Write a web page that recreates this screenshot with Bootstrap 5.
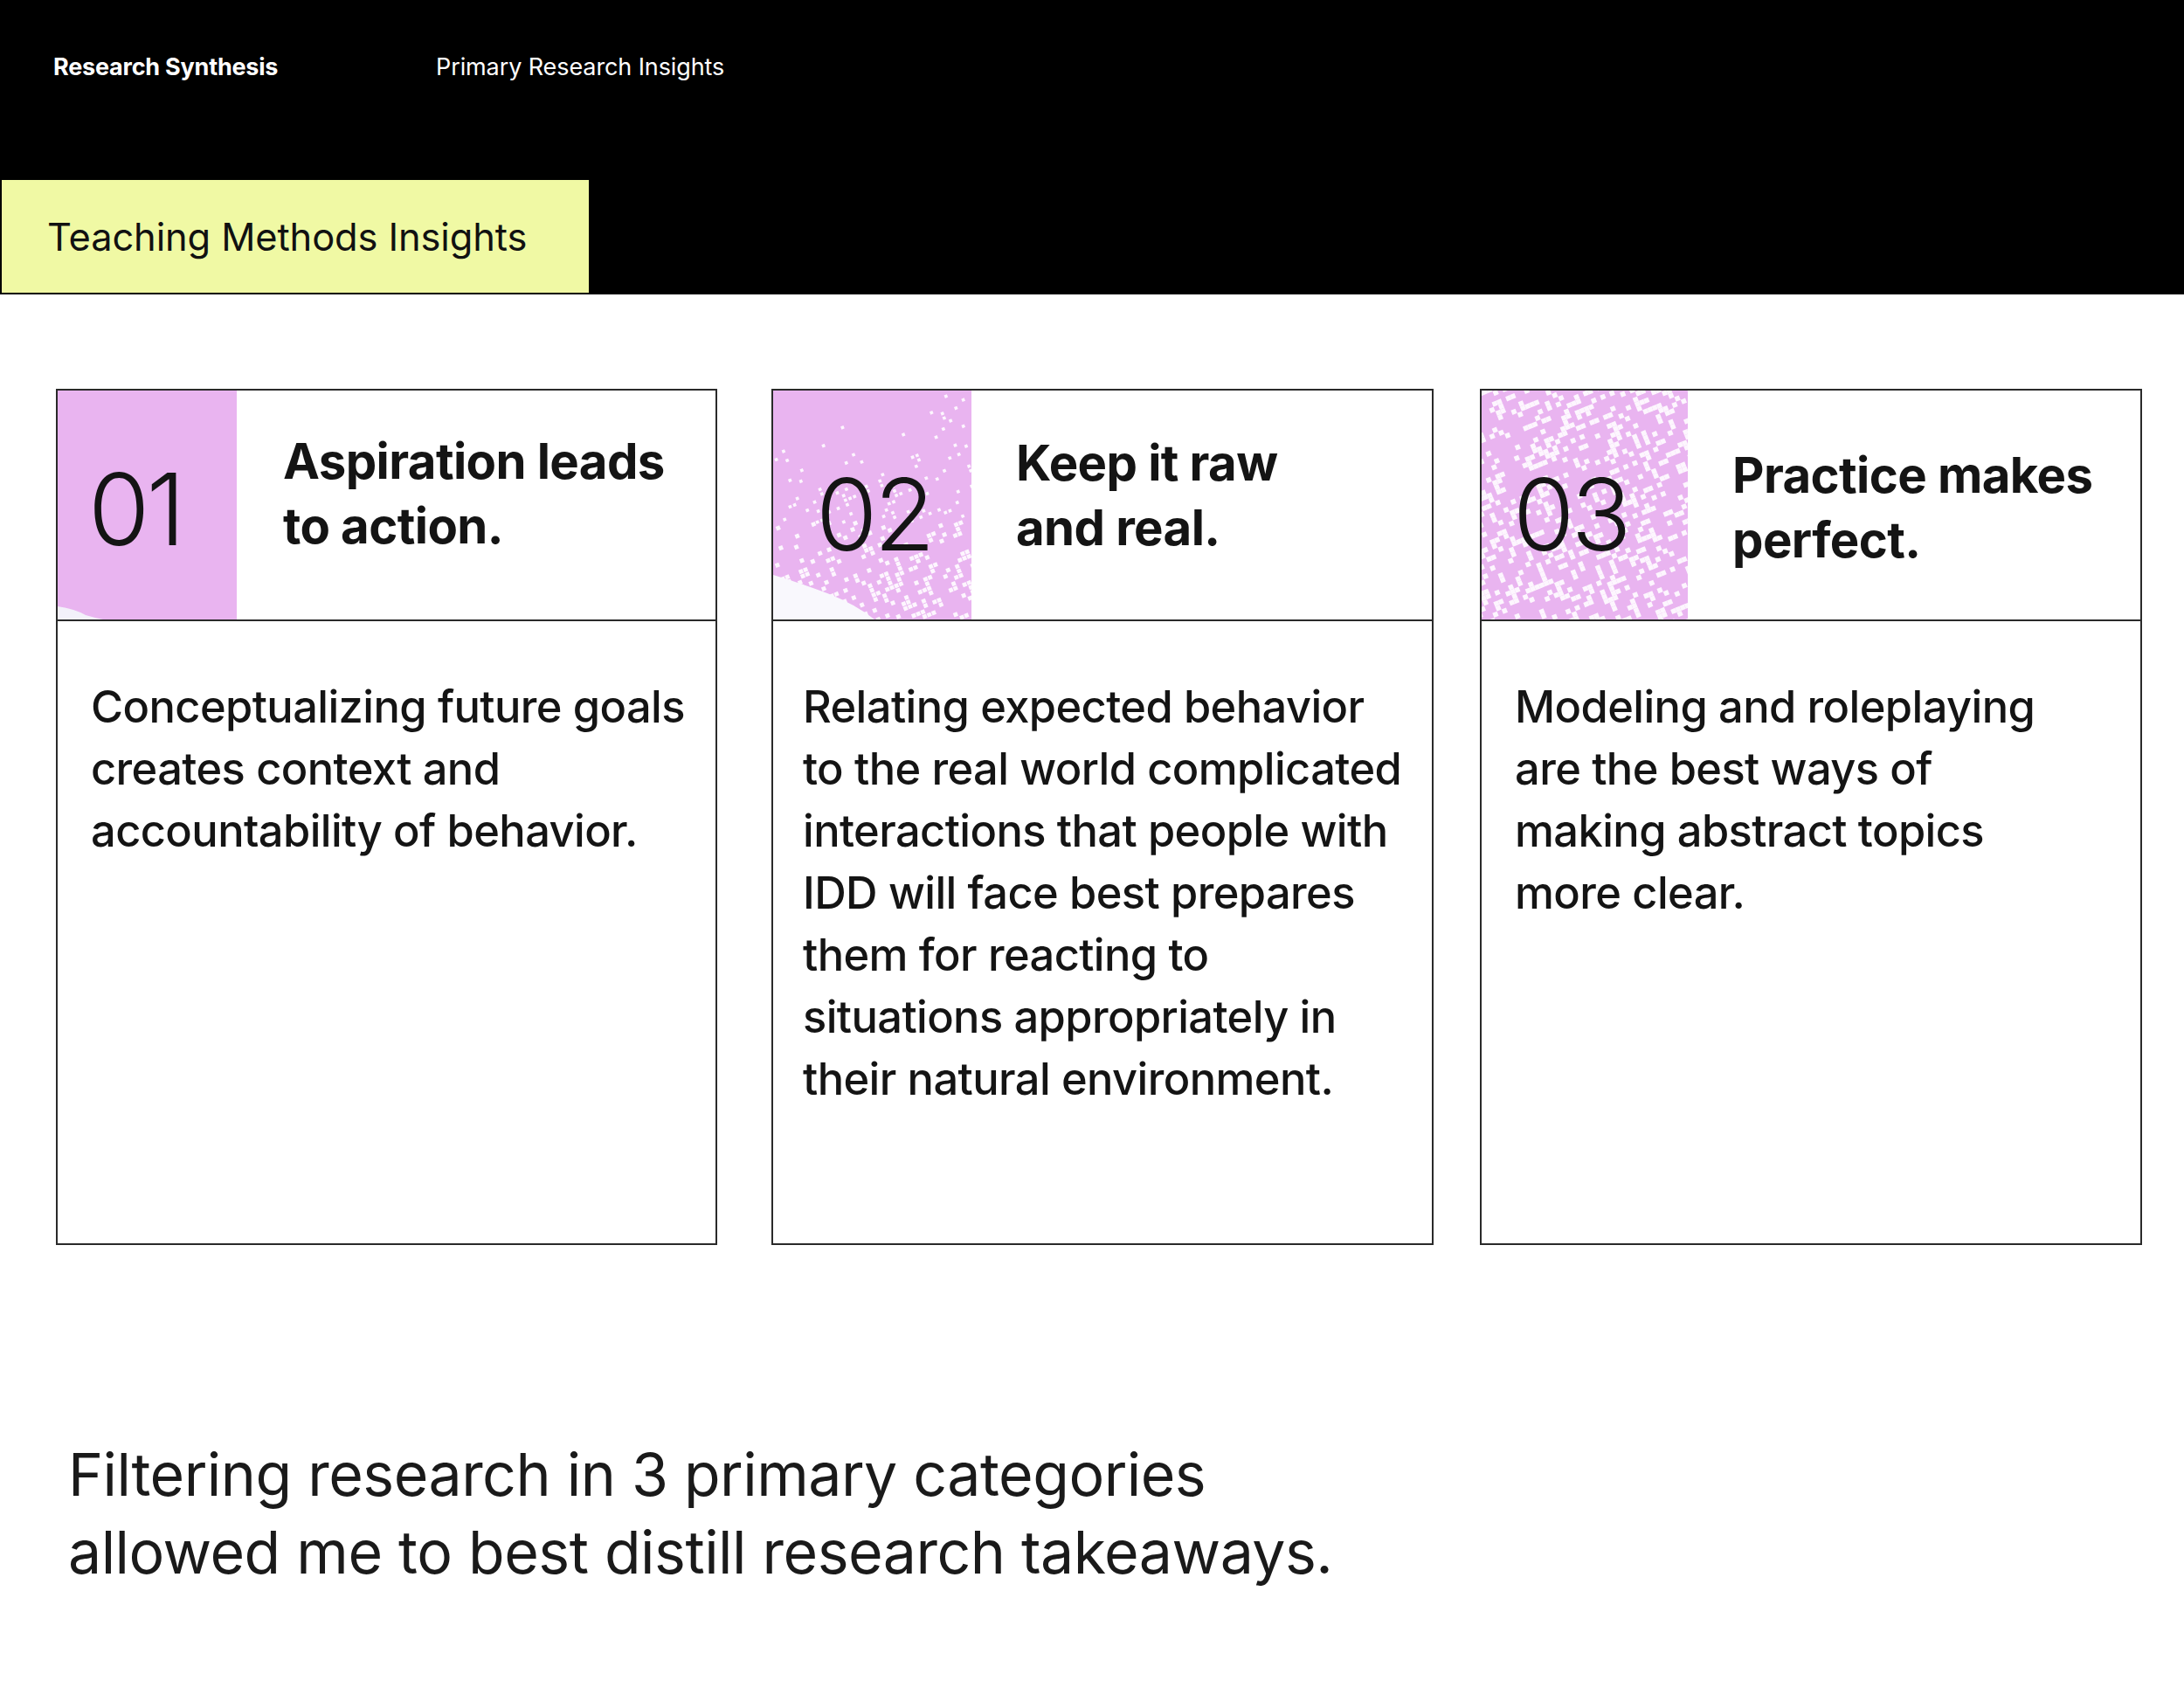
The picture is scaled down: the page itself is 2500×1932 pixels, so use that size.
<!DOCTYPE html>
<html lang="en">
<head>
<meta charset="utf-8">
<title>Research Synthesis</title>
<link href="https://cdn.jsdelivr.net/npm/bootstrap@5.3.0/dist/css/bootstrap.min.css" rel="stylesheet">
<style>
body{font-family:Inter,"Liberation Sans",sans-serif;color:#141414;background:#fff;width:2500px;height:1932px;overflow:hidden}
.top-band{background:#000;height:337px;color:#fff;padding-top:60px}
.top-nav{font-size:27px;line-height:34px;padding-left:61px;height:146px;letter-spacing:-.1px}
.top-nav b{width:438px;font-weight:700;letter-spacing:-.22px}
.tab-label{margin-left:2px;width:672px;height:129px;background:#f0f9a4;color:#111;font-size:43.4px;padding:2px 0 0 52px;letter-spacing:-.1px}
.cards-row{padding:108px 0 0 64px}
.sheet{width:758px;height:980px;border:2px solid #2a2a2a;border-radius:0;background:#fff;flex:none;color:#141414}
.sheet-a{width:757px;margin-right:62px}.sheet-b{margin-right:53px}
.sheet-head{height:264px;border-bottom:2px solid #2a2a2a;background:transparent;padding:0;border-radius:0!important}
.art{flex:none;height:262px;position:relative;background:#e9b4f0;overflow:hidden}
.art svg{position:absolute;inset:0;width:100%;height:100%}
.art span{position:absolute;font-size:114px;font-weight:340;line-height:1;letter-spacing:-4px;color:#141414}
.art-a{width:205px}.art-b{width:227px}.art-c{width:236px}
.art-a span{left:35px;top:79px}.art-b span{left:49px;top:85px}.art-c span{left:36px;top:85px}
.head-text{font-size:56.3px;line-height:74px;font-weight:700;letter-spacing:-.6px;margin:0}
.ht-a{padding:44px 0 0 53px}.ht-b{padding:46px 0 0 51px}.ht-c{padding:60px 0 0 51px}
.sheet-copy{font-size:50.6px;line-height:71px;padding:0;letter-spacing:-.6px;font-weight:450}
.sc-a{padding:62px 0 0 38px}.sc-b{padding:62px 0 0 34px}.sc-c{padding:62px 0 0 38px}
.closing{font-size:68px;line-height:89px;padding:0 0 0 78px;margin:218px 0 0;color:#1a1a1a;font-weight:400;letter-spacing:-.52px}
</style>
</head>
<body>
<header class="top-band">
  <nav class="top-nav d-flex"><b class="d-block">Research Synthesis</b><span>Primary Research Insights</span></nav>
  <div class="tab-label d-flex align-items-center">Teaching Methods Insights</div>
</header>
<main>
<section class="cards-row d-flex">
  <article class="card sheet sheet-a">
    <div class="card-header sheet-head d-flex">
      <div class="art art-a"><svg viewBox="0 0 205 262" preserveAspectRatio="none"><path d="M0 247 Q20 250 32 257 Q42 260 52 262 H0Z" fill="#f3f1fa"/></svg><span>01</span></div>
      <h2 class="head-text ht-a">Aspiration leads<br>to action.</h2>
    </div>
    <div class="card-body sheet-copy sc-a">Conceptualizing future goals<br>creates context and<br>accountability of behavior.</div>
  </article>
  <article class="card sheet sheet-b">
    <div class="card-header sheet-head d-flex">
      <div class="art art-b"><svg id="n2" viewBox="0 0 227 262" preserveAspectRatio="none"></svg><span>02</span></div>
      <h2 class="head-text ht-b">Keep it raw<br>and real.</h2>
    </div>
    <div class="card-body sheet-copy sc-b">Relating expected behavior<br>to the real world complicated<br>interactions that people with<br>IDD will face best prepares<br>them for reacting to<br>situations appropriately in<br>their natural environment.</div>
  </article>
  <article class="card sheet">
    <div class="card-header sheet-head d-flex">
      <div class="art art-c"><svg id="n3" viewBox="0 0 236 262" preserveAspectRatio="none"></svg><span>03</span></div>
      <h2 class="head-text ht-c">Practice makes<br>perfect.</h2>
    </div>
    <div class="card-body sheet-copy sc-c">Modeling and roleplaying<br>are the best ways of<br>making abstract topics<br>more clear.</div>
  </article>
</section>
<p class="closing">Filtering research in 3 primary categories<br>allowed me to best distill research takeaways.</p>
</main>
<script>
function rng(s){return function(){s=(s*1664525+1013904223)>>>0;return s/4294967296}}
function grid(id,w,h,seed,dens,size,extra){
  var r=rng(seed),c=5.6,a=-22*Math.PI/180,ca=Math.cos(a),sa=Math.sin(a),out='';
  for(var i=-70;i<90;i++)for(var j=-70;j<90;j++){
    var v=r(),x=i*c*ca-j*c*sa,y=i*c*sa+j*c*ca;
    if(x<-6||y<-6||x>w+6||y>h+6)continue;
    if(v<dens(x,y)){var s=size(x,y);out+='<rect x="'+(i*c).toFixed(1)+'" y="'+(j*c).toFixed(1)+'" width="'+s+'" height="'+s+'"/>';}
  }
  document.getElementById(id).innerHTML='<g fill="#fdf6fe" transform="rotate(-22)">'+out+'</g>'+(extra||'');
}
grid('n2',227,262,11,function(x,y){var d=Math.pow(y/262,1.6)*.3+(x/227)*.1-.02;if(y<40&&x<170)return 0;return d<.01?0:Math.min(.28,d)},
 function(x,y){return y<150?3.6:4.8},
 '<path d="M0 211 Q30 220 62 232 Q95 245 116 262 H0Z" fill="#f9f8fd"/>');
grid('n3',236,262,7,function(){return .27},function(){return 5.6});
</script>
<script src="https://cdn.jsdelivr.net/npm/bootstrap@5.3.0/dist/js/bootstrap.bundle.min.js"></script>
</body>
</html>
